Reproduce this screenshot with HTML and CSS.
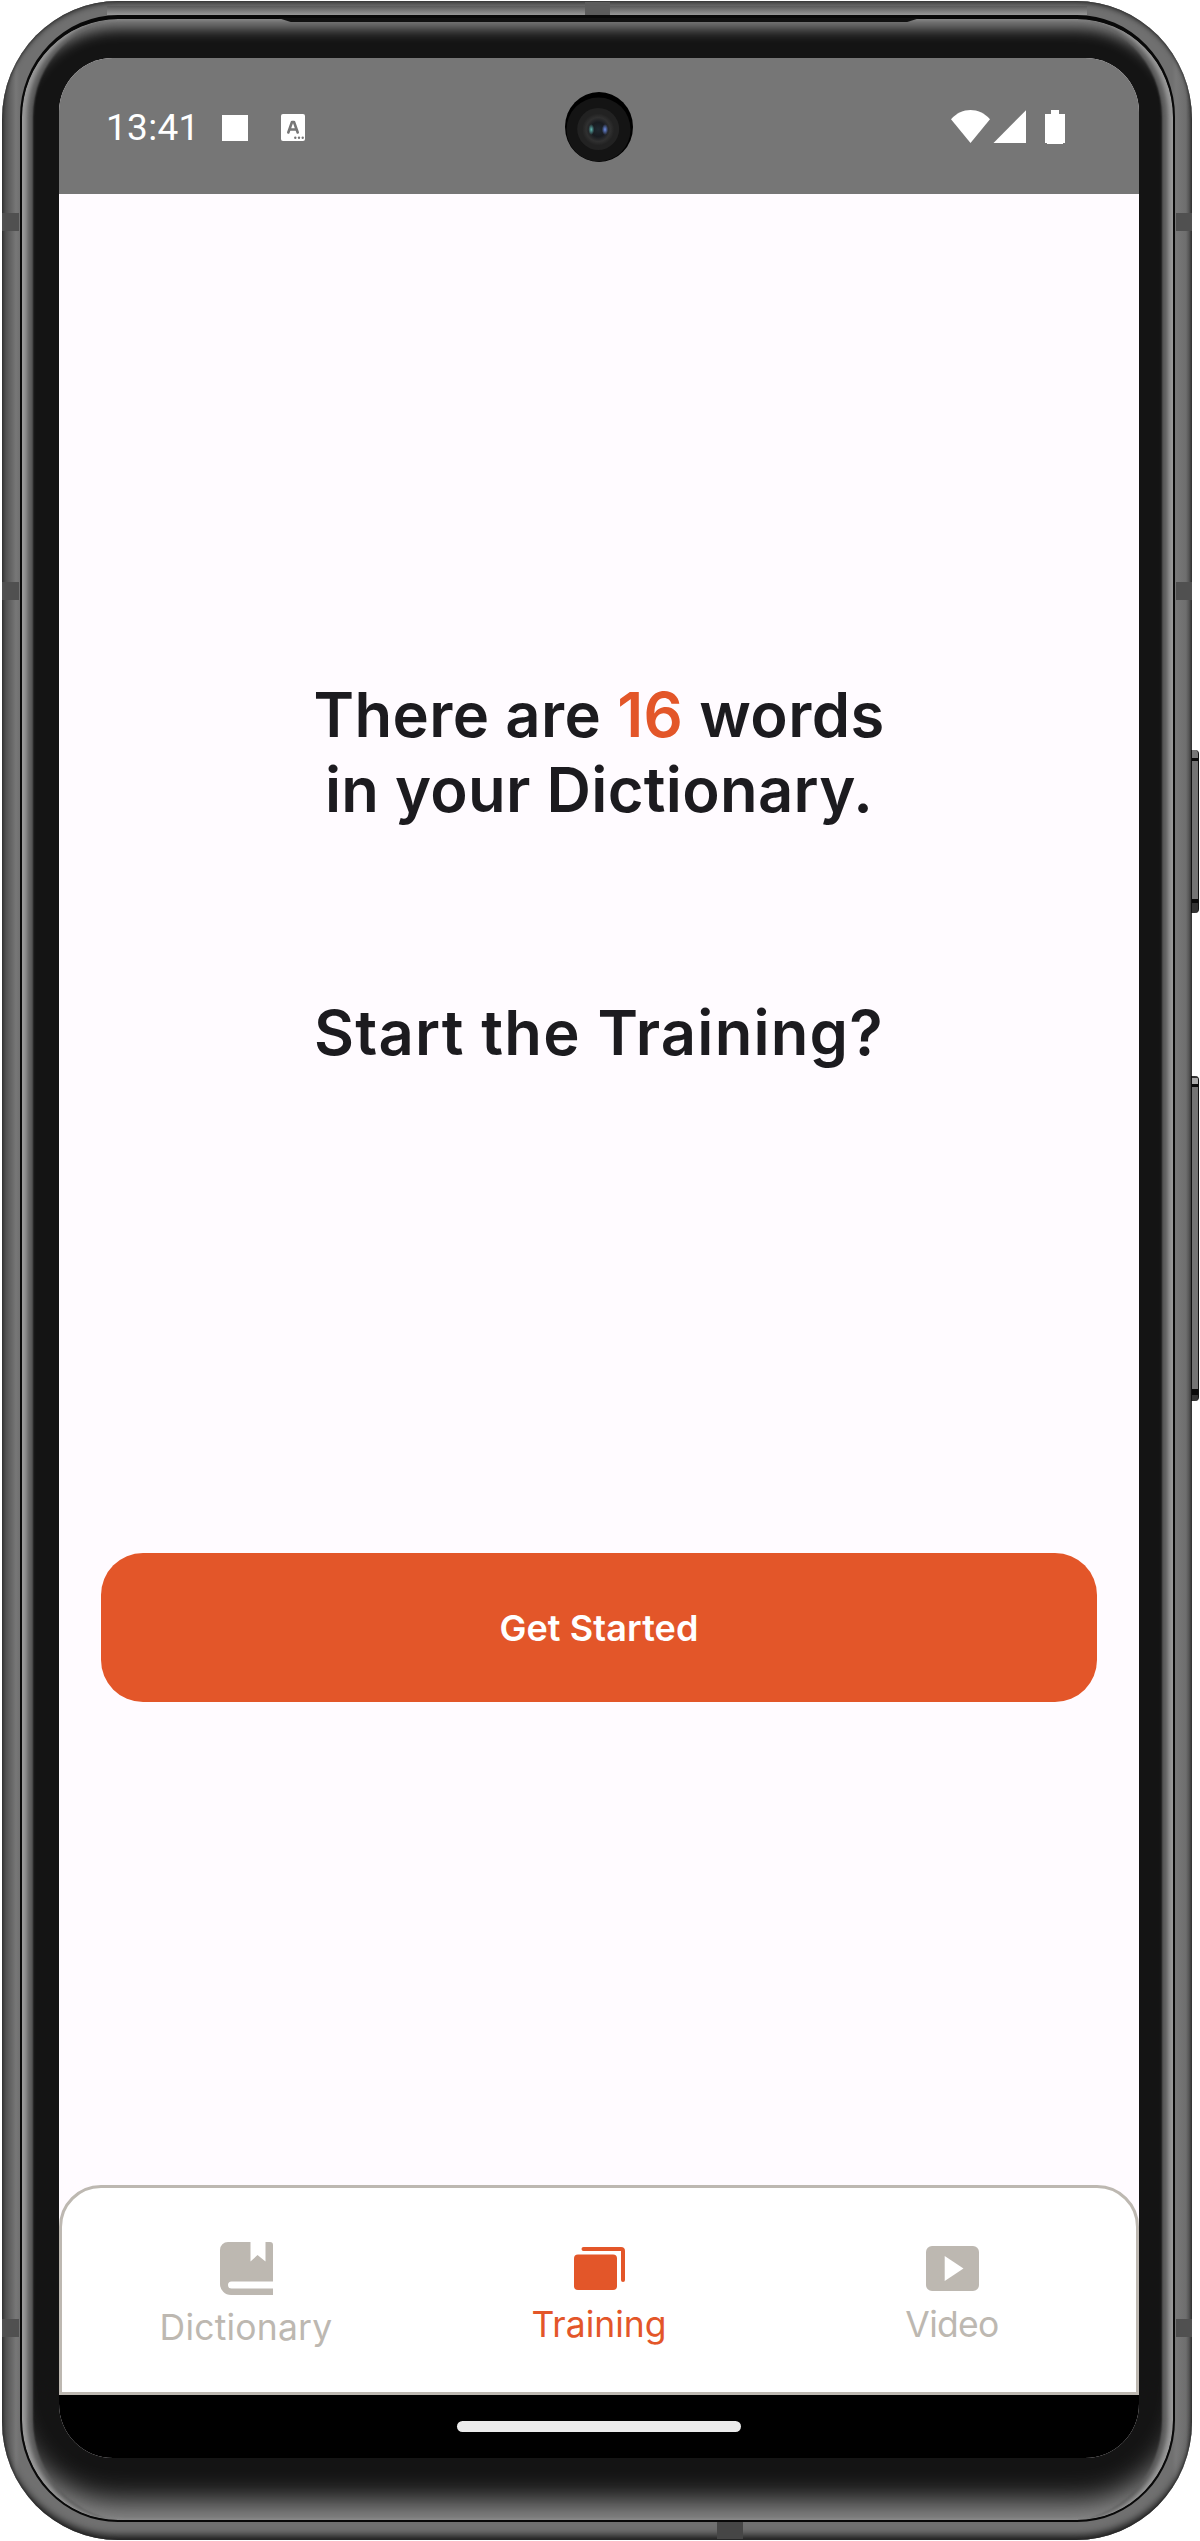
FILE: index.html
```
<!DOCTYPE html>
<html lang="en">
<head>
<meta charset="utf-8">
<title>Training</title>
<link rel="stylesheet" href="styles.css">
</head>
<body>
<div class="phone">
  <i class="key key-power"></i>
  <i class="key key-volume"></i>
  <i class="seam seam-top"></i>
  <i class="seam seam-bottom"></i>
  <i class="seam seam-left seam-a"></i>
  <i class="seam seam-left seam-b"></i>
  <i class="seam seam-left seam-c"></i>
  <i class="seam seam-right seam-a"></i>
  <i class="seam seam-right seam-b"></i>
  <i class="seam seam-right seam-c"></i>
  <div class="glass">
    <i class="speaker"></i>
    <div class="screen">
      <header class="status">
        <span class="clock">13:41</span>
        <i class="stop"></i>
        <svg class="lang" width="24" height="27" viewBox="0 0 24 27">
          <rect width="24" height="27" rx="2" fill="#fff"/>
          <path d="M7.3 18.5 11 8h2l3.700 10.500M9 15.500h6" fill="none" stroke="#767676" stroke-width="2.600" stroke-linecap="round" stroke-linejoin="round"/>
          <g fill="#767676"><circle cx="14.300" cy="23.800" r="1.200"/><circle cx="18" cy="23.800" r="1.200"/><circle cx="21.700" cy="23.800" r="1.200"/></g>
        </svg>
        <svg class="camera" width="68" height="70" viewBox="0 0 68 70">
          <defs>
            <radialGradient id="lens"><stop offset="0" stop-color="#1f2830"/><stop offset=".45" stop-color="#181b20"/><stop offset=".75" stop-color="#303030"/><stop offset="1" stop-color="#222"/></radialGradient>
            <radialGradient id="teal"><stop offset="0" stop-color="#5fb5b0"/><stop offset="1" stop-color="#5fb5b0" stop-opacity="0"/></radialGradient>
            <radialGradient id="blue"><stop offset="0" stop-color="#6f8fe8"/><stop offset="1" stop-color="#6f8fe8" stop-opacity="0"/></radialGradient>
          </defs>
          <ellipse cx="34" cy="35" rx="34" ry="35"/>
          <circle cx="33.500" cy="37.500" r="32" fill="#141414"/>
          <circle cx="33.200" cy="37" r="21" fill="#222"/>
          <circle cx="33.200" cy="37.500" r="16" fill="url(#lens)"/>
          <ellipse cx="26.300" cy="37.500" rx="3" ry="5.500" fill="url(#teal)"/>
          <ellipse cx="40" cy="37.500" rx="3.200" ry="5.500" fill="url(#blue)"/>
        </svg>
        <svg class="signals" width="114" height="34" viewBox="0 0 114 34" fill="#fff">
          <path d="M0 9.300C11-3 28-3 39 9.300L19.500 33z"/>
          <path d="M42.500 33 75 .3V33z"/>
          <path d="M100 0h8v4h6v29h-2v1H96v-1h-2V4h6z"/>
        </svg>
      </header>
      <main class="content">
        <h1 class="headline"><span class="line-a">There are <b class="count">16</b> words</span><br><span class="line-b">in your Dictionary.</span></h1>
        <h2 class="headline question">Start the Training?</h2>
        <button class="start">Get Started</button>
      </main>
      <nav class="tabs">
        <a class="tab tab-dictionary">
          <svg width="53" height="53" viewBox="0 0 53 53" fill="currentColor">
            <path d="M8 0h22.500v19.500L37.500 13l8 6.500V0H50a3 3 0 0 1 3 3v36.500H11.500a3.500 3.500 0 0 0 0 7H53V53H11A11 11 0 0 1 0 42V8a8 8 0 0 1 8-8z"/>
          </svg>
          <span>Dictionary</span>
        </a>
        <a class="tab tab-training">
          <svg width="51" height="43" viewBox="0 0 51 43">
            <rect y="7.600" width="43" height="35.400" rx="4" fill="currentColor"/>
            <path d="M9.500 2H47q2 0 2 2v29" fill="none" stroke="currentColor" stroke-width="4" stroke-linecap="round"/>
          </svg>
          <span>Training</span>
        </a>
        <a class="tab tab-video">
          <svg width="53" height="45" viewBox="0 0 53 45">
            <path fill="currentColor" fill-rule="evenodd" d="M6 0h41a6 6 0 0 1 6 6v33a6 6 0 0 1-6 6H6a6 6 0 0 1-6-6V6a6 6 0 0 1 6-6zm12.700 10v25L37.500 22.500z"/>
          </svg>
          <span>Video</span>
        </a>
      </nav>
      <footer class="gesture"><i class="handle"></i></footer>
    </div>
  </div>
</div>
</body>
</html>
```
FILE: styles.css
```
* { box-sizing: border-box; }
html, body { margin: 0; background: #fff; }
body { height: 2541px; overflow: hidden; padding: 1px 8px 1px 2px; }
body, button { font-family: Inter, Roboto, "Liberation Sans", sans-serif; }
i { display: block; }

/* Metal frame */
.phone {
  position: relative;
  height: 2539px;
  padding: 14px 17px 18px 18px;
  border-radius: 116px / 118px;
  background: linear-gradient(90deg, #444 0, #777 14px, #707070 18px, #707070 1170px, #787878 1174px, #6e6e6e 1184px, #444 1190px);
  box-shadow: inset 0 0 3px #222, inset 0 5px 5px -2px #444, inset 0 -8px 7px -3px #222;
}
.phone::before {
  content: "";
  position: absolute;
  top: 5px; left: 105px; right: 105px; height: 9px;
  background: linear-gradient(#5a5a5a, #999);
}

/* Dark glass with lit edges */
.glass {
  position: relative;
  height: 2507px;
  padding: 43px 34px 63px 37px;
  border: solid #090909;
  border-width: 4px 2px 2px;
  border-radius: 98px / 102px;
  background: #141414;
  box-shadow:
    inset 6px 0 4px -1px #999,
    inset -6px 0 4px -1px #999,
    inset 12px 0 2px -1px #5c5c5c,
    inset -12px 0 2px -1px #5c5c5c,
    inset 0 18px 14px -8px #808080,
    inset 0 -34px 28px -15px #8a8a8a;
}
.speaker {
  position: absolute;
  top: -1px; left: 256px; width: 642px; height: 4px;
  background: #111;
  clip-path: polygon(0 0, 100% 0, 98% 100%, 2% 100%);
}

.seam { position: absolute; background: #505050; }
.seam-top { top: 1px; left: 583px; width: 25px; height: 15px; background: #5c5c5c; }
.seam-bottom { bottom: 1px; left: 715px; width: 26px; height: 17px; background: #464646; }
.seam-left { left: 0; width: 17px; height: 18px; }
.seam-right { right: 0; width: 16px; height: 18px; }
.seam-a { top: 212px; }
.seam-b { top: 581px; }
.seam-c { top: 2318px; }

.key {
  position: absolute;
  right: -7px; width: 8px;
  border: solid #111;
  border-width: 0 1px 0 1px;
  border-radius: 0 4px 4px 0;
}
.key-power { top: 749px; height: 163px; background: linear-gradient(#777 0 8px, #0a0a0a 8px 11px, #747474 11px 149px, #0a0a0a 149px 153px, #333 153px); }
.key-volume { top: 1075px; height: 325px; background: linear-gradient(#333 0 2px, #aaa 2px 8px, #0a0a0a 8px 11px, #747474 11px 313px, #0a0a0a 313px 319px, #333 319px); }

/* Screen */
.screen {
  display: flex;
  flex-direction: column;
  width: 1080px;
  height: 2400px;
  margin-top: -4px;
  border-radius: 54px;
  overflow: hidden;
  background: #fffbff;
}
.status {
  position: relative;
  flex: none;
  display: flex;
  align-items: center;
  height: 136px;
  padding: 3px 74px 0 47px;
  background: #767676;
  color: #fff;
}
.clock { font: 400 37px/44px Roboto, sans-serif; letter-spacing: .3px; }
.stop { width: 26px; height: 26px; margin-left: 22px; background: #fff; }
.lang { margin-left: 33px; }
.signals { margin-left: auto; margin-top: -2px; }
.camera { position: absolute; left: 506px; top: 34px; }

.content {
  flex: 1;
  display: flex;
  flex-direction: column;
  align-items: center;
  padding-top: 483px;
}
.headline {
  margin: 0;
  font-size: 61.5px;
  font-weight: 600;
  line-height: 75px;
  text-align: center;
  color: #1c1b1f;
}
.line-a { letter-spacing: .4px; }
.line-b { letter-spacing: .3px; }
.count { font-weight: inherit; color: #e35629; }
.question { margin-top: 168px; letter-spacing: 1.2px; }
.start {
  width: 996px;
  height: 149px;
  margin-top: 483px;
  border: 0;
  border-radius: 42px;
  background: #e35629;
  color: #fff;
  font-size: 36px;
  font-weight: 600;
  letter-spacing: .1px;
}

.tabs {
  flex: none;
  display: flex;
  justify-content: space-between;
  height: 210px;
  padding: 0 68px;
  border: 3px solid #bdb8b1;
  border-radius: 42px 42px 0 0;
  background: #fff;
}
.tab {
  display: flex;
  flex-direction: column;
  align-items: center;
  width: 232px;
  color: #bdb8b1;
  font-size: 35.5px;
  line-height: 44px;
}
.tab-dictionary { padding-top: 54px; letter-spacing: .2px; }
.tab-dictionary span { margin-top: 11px; }
.tab-training { padding-top: 59px; color: #e35629; }
.tab-training span { margin-top: 13px; }
.tab-video { padding-top: 58px; letter-spacing: -.7px; }
.tab-video span { margin-top: 12px; }

.gesture {
  flex: none;
  display: flex;
  align-items: center;
  justify-content: center;
  height: 63px;
  background: #000;
}
.handle { width: 284px; height: 11px; border-radius: 6px; background: #ebebeb; }
```
